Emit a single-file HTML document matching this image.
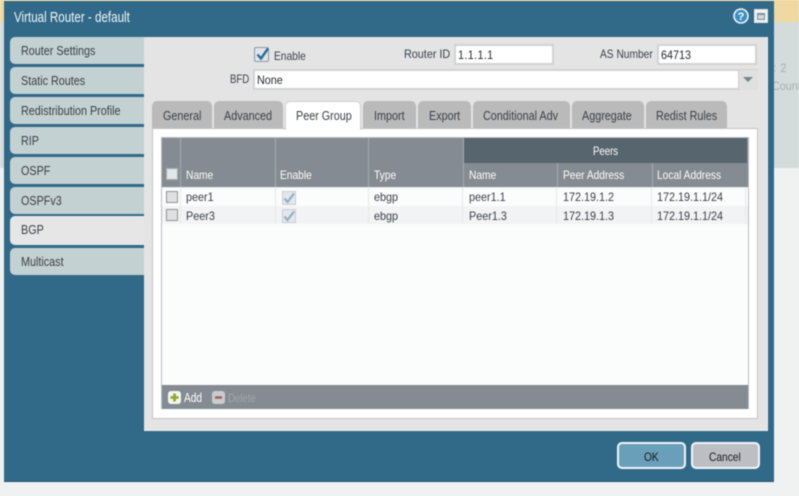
<!DOCTYPE html>
<html><head><meta charset="utf-8"><style>
html,body{margin:0;padding:0}
body{width:799px;height:496px;overflow:hidden;position:relative;background:#f0f2f1;font-family:"Liberation Sans",sans-serif;font-size:12px;color:#3a4048}
#w{position:absolute;left:0;top:0;width:799px;height:496px;filter:blur(.45px)}
.b{position:absolute;box-sizing:border-box}
.t{position:absolute;white-space:nowrap;line-height:14px;transform-origin:0 50%;transform:scaleX(.9)}
.l{font-size:13px;transform:scaleX(.83)}
.n{transform:scaleX(.85)}
.s{background:#c4d1d2;border-radius:5px 0 0 5px;left:10px;width:134px;height:27px}
.tb{background:#bababa;border-radius:5px 5px 0 0;top:101px;height:27px}
.h{color:#fff;transform:scaleX(.85)}
.v{top:138px;width:1px;background:#a5abb0}
.rv{width:1px;background:#e6e8ea;top:188px;height:36px}
.cb{width:12px;height:12px;background:#dfe0e1;border:1px solid #8f9498}
</style></head><body><div id="w">
<div class="b" style="left:0;top:0;width:799px;height:22px;background:#f0d9a0"></div>
<div class="b" style="left:0;top:22px;width:799px;height:146px;background:#d4dbdb"></div>
<span class="t" style="left:770px;top:61px;color:#a9b0ae;letter-spacing:.5px">t: 2</span>
<span class="t" style="left:772px;top:79px;color:#a9b0ae">Count:</span>
<div class="b" style="left:4px;top:1px;width:770px;height:481px;background:#316988;border-bottom:1px solid #22536e"></div>
<span class="t" style="left:14px;top:11px;color:#f2f6f8;font-size:14.5px;transform:scaleX(.8)">Virtual Router - default</span>
<svg class="b" style="left:733px;top:8px" width="16" height="16" viewBox="0 0 16 16"><circle cx="8" cy="8" r="7" fill="#3d8fc4" stroke="#eef4f7" stroke-width="1.6"/><text x="8" y="12" text-anchor="middle" font-family="Liberation Sans" font-weight="bold" font-size="11" fill="#fff">?</text></svg>
<div class="b" style="left:754px;top:9px;width:14px;height:14px;background:#f1f3f4;border:1px solid #dfe3e5"><div class="b" style="left:2px;top:3px;width:8px;height:7px;border:1px solid #7f909c;border-top-width:2px;background:#cfd7dc"></div></div>

<div class="b s" style="top:37px"></div><span class="t l" style="left:21px;top:44px">Router Settings</span>
<div class="b s" style="top:67px"></div><span class="t l" style="left:21px;top:74px">Static Routes</span>
<div class="b s" style="top:97px"></div><span class="t l" style="left:21px;top:104px">Redistribution Profile</span>
<div class="b s" style="top:127px"></div><span class="t l" style="left:21px;top:134px">RIP</span>
<div class="b s" style="top:157px"></div><span class="t l" style="left:21px;top:164px">OSPF</span>
<div class="b s" style="top:187px"></div><span class="t l" style="left:21px;top:194px">OSPFv3</span>
<div class="b s" style="top:216px;height:29px;background:#e6e6e6"></div><span class="t l" style="left:21px;top:223px">BGP</span>
<div class="b s" style="top:248px"></div><span class="t l" style="left:21px;top:255px">Multicast</span>

<div class="b" style="left:144px;top:37px;width:624px;height:394px;background:#e4e4e4;border-right:1px solid #eef0f0;border-bottom:1px solid #eef0f0"></div>

<div class="b" style="left:254px;top:47px;width:15px;height:15px;background:#dfe4e8;border:1px solid #8e9aa3;border-radius:2px"></div>
<svg class="b" style="left:254px;top:45px" width="17" height="17" viewBox="0 0 17 17"><path d="M3.5 9.5 L7 13.5 L14 3.5" fill="none" stroke="#2a6c96" stroke-width="2.4"/></svg>
<span class="t n" style="left:274px;top:49px">Enable</span>
<span class="t" style="left:404px;top:47px">Router ID</span>
<div class="b" style="left:454px;top:44px;width:100px;height:21px;background:#fff;border:2px solid #d2d2d2"></div>
<span class="t" style="left:458px;top:48px;color:#25292d;letter-spacing:.4px">1.1.1.1</span>
<span class="t n" style="left:600px;top:47px">AS Number</span>
<div class="b" style="left:657px;top:44px;width:100px;height:21px;background:#fff;border:2px solid #d2d2d2"></div>
<span class="t" style="left:661px;top:48px;color:#25292d">64713</span>
<span class="t" style="left:230px;top:72px;transform:scaleX(.8)">BFD</span>
<div class="b" style="left:253px;top:69px;width:505px;height:21px;background:#fff;border:2px solid #d2d2d2"></div>
<div class="b" style="left:738px;top:70px;width:20px;height:20px;background:#e0e0e0;border-left:1px solid #cfcfcf"></div>
<div class="b" style="left:743px;top:77px;width:0;height:0;border-left:5px solid transparent;border-right:5px solid transparent;border-top:5px solid #75858f"></div>
<span class="t" style="left:257px;top:73px;color:#25292d">None</span>

<div class="b" style="left:152px;top:128px;width:606px;height:291px;background:#fff;border:1px solid #c4c4c4"></div>
<div class="b tb" style="left:152px;width:60px"></div><span class="t l" style="left:163px;top:109px">General</span>
<div class="b tb" style="left:214px;width:69px"></div><span class="t l" style="left:224px;top:109px">Advanced</span>
<div class="b tb" style="left:285px;width:76px;height:29px;background:#fff;border:1px solid #d0d0d0;border-bottom:0"></div><span class="t l" style="left:296px;top:109px">Peer Group</span>
<div class="b tb" style="left:363px;width:53px"></div><span class="t l" style="left:374px;top:109px">Import</span>
<div class="b tb" style="left:418px;width:53px"></div><span class="t l" style="left:429px;top:109px">Export</span>
<div class="b tb" style="left:473px;width:97px"></div><span class="t l" style="left:483px;top:109px">Conditional Adv</span>
<div class="b tb" style="left:572px;width:72px"></div><span class="t l" style="left:582px;top:109px">Aggregate</span>
<div class="b tb" style="left:646px;width:81px"></div><span class="t l" style="left:656px;top:109px">Redist Rules</span>

<div class="b" style="left:161px;top:137px;width:588px;height:272px;background:#fbfcfc;border:1px solid #b8bcc0"></div>
<div class="b" style="left:162px;top:138px;width:586px;height:49px;background:#848b92"></div>
<div class="b" style="left:463px;top:138px;width:284px;height:25px;background:#57656f"></div>
<div class="b" style="left:162px;top:206px;width:586px;height:18px;background:#f1f3f4"></div>
<div class="b" style="left:162px;top:187px;width:586px;height:1px;background:#e8eaeb"></div>
<div class="b v" style="left:180px;height:49px"></div>
<div class="b v" style="left:275px;height:49px"></div>
<div class="b v" style="left:368px;height:49px"></div>
<div class="b v" style="left:463px;height:49px"></div>
<div class="b v" style="left:557px;top:163px;height:24px"></div>
<div class="b v" style="left:652px;top:163px;height:24px"></div>
<div class="b rv" style="left:180px"></div><div class="b rv" style="left:275px"></div><div class="b rv" style="left:368px"></div><div class="b rv" style="left:462px"></div><div class="b rv" style="left:556px"></div><div class="b rv" style="left:651px"></div><div class="b rv" style="left:745px"></div>

<span class="t h" style="left:593px;top:144px;transform:scaleX(.8)">Peers</span>
<div class="b cb" style="left:166px;top:168px;background:#e3e5e7;border-color:#a5abb0"></div>
<span class="t h" style="left:186px;top:168px">Name</span>
<span class="t h" style="left:280px;top:168px">Enable</span>
<span class="t h" style="left:374px;top:168px">Type</span>
<span class="t h" style="left:469px;top:168px">Name</span>
<span class="t h" style="left:563px;top:168px">Peer Address</span>
<span class="t h" style="left:657px;top:168px">Local Address</span>

<div class="b cb" style="left:166px;top:191px"></div>
<span class="t" style="left:186px;top:190px">peer1</span>
<svg class="b" style="left:282px;top:191px" width="14" height="14" viewBox="0 0 14 14"><rect x=".5" y=".5" width="13" height="13" fill="#e4e7e9" stroke="#c9ced2"/><path d="M2.5 7.500 L5.500 11 L12 2.500" fill="none" stroke="#8fb0c6" stroke-width="2.200"/></svg>
<span class="t" style="left:374px;top:190px">ebgp</span>
<span class="t" style="left:469px;top:190px">peer1.1</span>
<span class="t" style="left:563px;top:190px">172.19.1.2</span>
<span class="t" style="left:657px;top:190px">172.19.1.1/24</span>

<div class="b cb" style="left:166px;top:209px"></div>
<span class="t" style="left:186px;top:209px">Peer3</span>
<svg class="b" style="left:282px;top:209px" width="14" height="14" viewBox="0 0 14 14"><rect x=".5" y=".5" width="13" height="13" fill="#e4e7e9" stroke="#c9ced2"/><path d="M2.5 7.500 L5.500 11 L12 2.500" fill="none" stroke="#8fb0c6" stroke-width="2.200"/></svg>
<span class="t" style="left:374px;top:209px">ebgp</span>
<span class="t" style="left:469px;top:209px">Peer1.3</span>
<span class="t" style="left:563px;top:209px">172.19.1.3</span>
<span class="t" style="left:657px;top:209px">172.19.1.1/24</span>

<div class="b" style="left:162px;top:385px;width:586px;height:24px;background:#848b92"></div>
<svg class="b" style="left:168px;top:391px" width="13" height="13" viewBox="0 0 13 13"><rect width="13" height="13" rx="3" fill="#f2f4ee"/><path d="M6.5 2.5V10.500M2.500 6.500H10.500" stroke="#8ea62a" stroke-width="2.600"/></svg>
<span class="t h" style="left:184px;top:391px;font-size:13px;transform:scaleX(.78)">Add</span>
<svg class="b" style="left:212px;top:391px" width="13" height="13" viewBox="0 0 13 13"><rect width="13" height="13" rx="3" fill="#c9cbce"/><path d="M3 6.500H10" stroke="#9c5f58" stroke-width="2.400"/></svg>
<span class="t" style="left:228px;top:391px;color:#a1a6ab;transform:scaleX(.8)">Delete</span>

<div class="b" style="left:617px;top:442px;width:69px;height:27px;background:#6a9fba;border:2px solid #f3f6f8;border-radius:5px"></div>
<span class="t" style="left:644px;top:450px;color:#14181c;transform:scaleX(.85)">OK</span>
<div class="b" style="left:691px;top:442px;width:69px;height:27px;background:#bcbec4;border:2px solid #f3f6f8;border-radius:5px"></div>
<span class="t" style="left:709px;top:450px;color:#14181c;transform:scaleX(.85)">Cancel</span>
</div></body></html>
